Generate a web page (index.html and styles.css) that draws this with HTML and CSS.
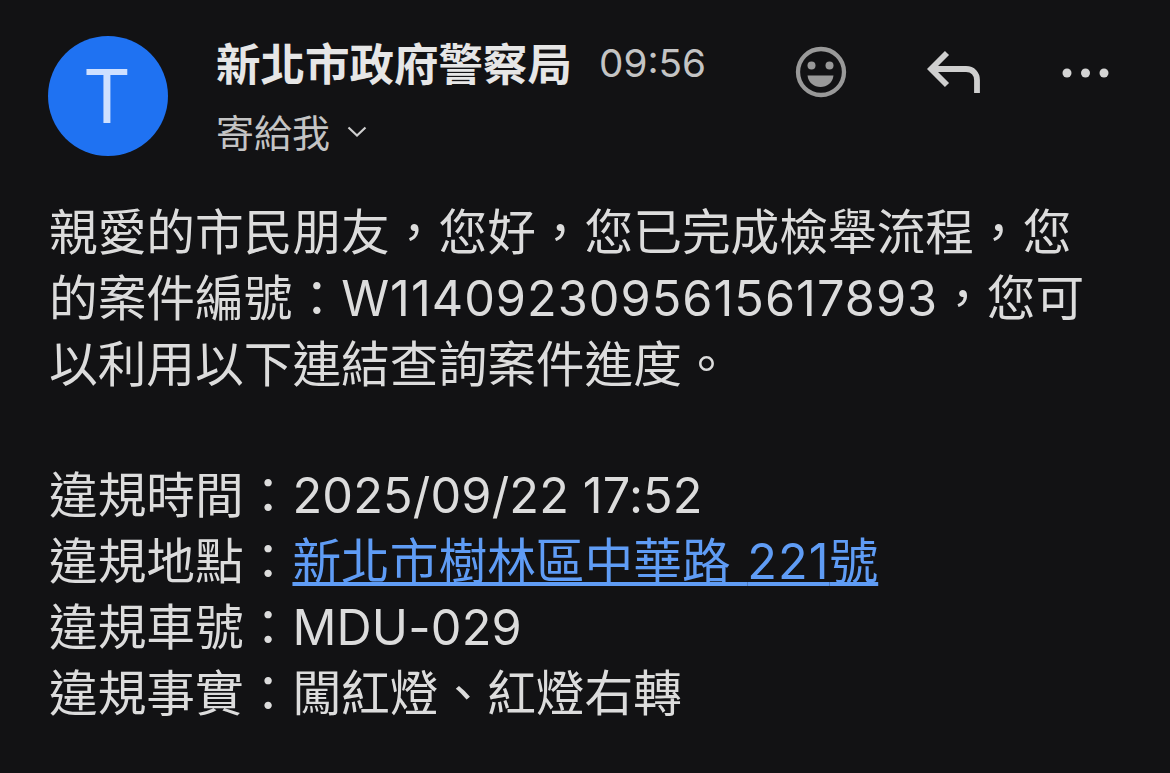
FILE: index.html
```html
<!DOCTYPE html>
<html lang="zh-Hant">
<head>
<meta charset="utf-8">
<title>郵件</title>
<link rel="stylesheet" href="styles.css">
</head>
<body>
<header class="head">
  <div class="avatar">T</div>
  <div class="meta">
    <div class="sender-row">
      <span class="sender">新北市政府警察局</span>
      <span class="time">09:56</span>
    </div>
    <div class="to-row">
      <span class="to">寄給我</span>
      <svg class="chev" viewBox="0 0 20 12" width="20" height="12"><path d="M1.5 1.5 L10 9.5 L18.500 1.500" fill="none" stroke="#cfcfcf" stroke-width="2.200"/></svg>
    </div>
  </div>
  <div class="actions">
    <svg class="ic-smile" viewBox="0 0 52 52" width="52" height="52">
      <circle cx="26" cy="26" r="23" fill="none" stroke="#999" stroke-width="4.300"/>
      <circle cx="16.500" cy="19.500" r="4" fill="#999"/>
      <circle cx="34.500" cy="19.500" r="4" fill="#999"/>
      <path d="M12.500 29.500 H38.500 C37.500 37 32 41 25.500 41 C19 41 13.500 37 12.500 29.500 Z" fill="#999"/>
    </svg>
    <svg class="ic-reply" viewBox="0 0 54 44" width="54" height="44">
      <path d="M20 3 L4 19 L20 35 M4 19 H39 C46 19 50 24 50 30 V43" fill="none" stroke="#cfcfcf" stroke-width="5.800"/>
    </svg>
    <svg class="ic-more" viewBox="0 0 48 10" width="48" height="10">
      <circle cx="5" cy="5" r="4.500" fill="#d4d4d4"/>
      <circle cx="23.500" cy="5" r="4.500" fill="#d4d4d4"/>
      <circle cx="42" cy="5" r="4.500" fill="#d4d4d4"/>
    </svg>
  </div>
</header>
<main class="body">
  <p class="para">親愛的市民朋友，您好，您已完成檢舉流程，您<br>的案件編號：<span class="case">W1140923095615617893</span>，您可<br>以利用以下連結查詢案件進度。</p>
  <p class="para">違規時間：<span class="latin">2025/09/22 17:52</span><br>違規地點：<a class="link" href="#">新北市樹林區中華路 <span class="case">221</span>號</a><br>違規車號：<span class="latin">MDU-029</span><br>違規事實：闖紅燈、紅燈右轉</p>
</main>
</body>
</html>
```
FILE: styles.css
```css
html, body { margin: 0; padding: 0; }
body {
  width: 1170px;
  height: 773px;
  overflow: hidden;
  background: #121214;
  color: #dcdcdc;
  font-family: Inter, "Noto Sans CJK TC", sans-serif;
}
.head {
  display: flex;
  align-items: flex-start;
  padding: 36px 60px 0 48px;
}
.avatar {
  width: 120px;
  height: 120px;
  box-sizing: border-box;
  padding-right: 2px;
  flex: none;
  border-radius: 50%;
  background: #1f72f2;
  color: #cfe0ff;
  font-size: 74px;
  line-height: 120px;
  text-align: center;
}
.meta {
  margin-left: 48px;
  display: flex;
  flex-direction: column;
}
.sender-row {
  display: flex;
  align-items: baseline;
  gap: 27px;
  height: 58px;
}
.sender {
  font-size: 44.5px;
  font-weight: 700;
  line-height: 58px;
  color: #e6e6e6;
}
.time {
  font-size: 38.7px;
  color: #c4c4c4;
  position: relative;
  top: -4px;
}
.to-row {
  display: flex;
  align-items: center;
  gap: 17px;
  margin-top: 8px;
  height: 56px;
}
.to {
  font-size: 38px;
  color: #c4c4c4;
}
.chev { flex: none; margin-top: 4px; }
.actions {
  margin-left: auto;
  display: flex;
  align-items: center;
  gap: 0;
  height: 72px;
}
.ic-smile { margin-right: 80px; margin-top: -1px; }
.ic-reply { margin-right: 81px; }
.ic-more { margin-top: 1px; }
.body {
  padding: 42px 0 0 49px;
  font-size: 48.7px;
  line-height: 66px;
  color: #dcdcdc;
}
.para { margin: 0 0 65px; white-space: nowrap; }
.case { letter-spacing: 1px; }
.latin { letter-spacing: 0.15px; }
.link { color: #5f9cf5; text-decoration: underline; word-spacing: 3px; }
```
